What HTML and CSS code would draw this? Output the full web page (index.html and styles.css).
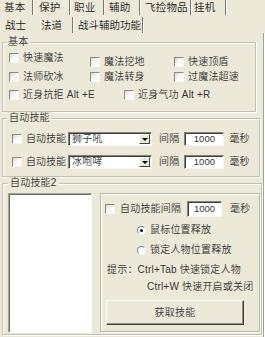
FILE: index.html
```html
<!DOCTYPE html>
<html>
<head>
<meta charset="utf-8">
<link rel="stylesheet" href="styles.css">
</head>
<body>
<div class="tabs t1">
  <span class="tab a1">基本</span>
  <span class="tab a2">保护</span>
  <span class="tab a3">职业</span>
  <span class="tab a4">辅助</span>
  <span class="tab a5">飞捡物品</span>
  <span class="tab a6">挂机</span>
</div>
<div class="tabs t2">
  <span class="tab b1">战士</span>
  <span class="tab b2">法道</span>
  <span class="tab b3">战斗辅助功能</span>
</div>
<div class="page">
  <fieldset class="grp g1">
    <legend>基本</legend>
    <div class="grid3">
      <label class="cb hi"><span class="box"></span>快速魔法</label>
      <label class="cb lo"><span class="box"></span>魔法挖地</label>
      <label class="cb lo"><span class="box"></span>快速顶盾</label>
      <label class="cb"><span class="box"></span>法师砍冰</label>
      <label class="cb"><span class="box"></span>魔法转身</label>
      <label class="cb"><span class="box"></span>过魔法超速</label>
    </div>
    <div class="row3">
      <label class="cb"><span class="box"></span>近身抗拒 Alt +E</label>
      <label class="cb"><span class="box"></span>近身气功 Alt +R</label>
    </div>
  </fieldset>

  <fieldset class="grp g2">
    <legend>自动技能</legend>
    <div class="skrow">
      <label class="cb"><span class="box"></span><span class="lbl">自动技能</span></label>
      <span class="combo"><span class="val">狮子吼</span><span class="arrow"><i></i></span></span>
      <span class="gl">间隔</span>
      <span class="field">1000</span>
      <span class="unit">毫秒</span>
    </div>
    <div class="skrow second">
      <label class="cb"><span class="box"></span><span class="lbl">自动技能</span></label>
      <span class="combo"><span class="val">冰咆哮</span><span class="arrow"><i></i></span></span>
      <span class="gl">间隔</span>
      <span class="field">1000</span>
      <span class="unit">毫秒</span>
    </div>
  </fieldset>

  <fieldset class="grp g3">
    <legend>自动技能2</legend>
    <div class="g3body">
      <div class="listbox"></div>
      <div class="panel">
        <div class="prow">
          <label class="cb wide"><span class="box"></span><span class="lbl6">自动技能间隔</span></label>
          <span class="field small">1000</span>
          <span class="unit2">毫秒</span>
        </div>
        <label class="rb r1"><span class="radio on"></span>鼠标位置释放</label>
        <label class="rb r2"><span class="radio"></span>锁定人物位置释放</label>
        <div class="tip t-a">提示：Ctrl+Tab 快速锁定人物</div>
        <div class="tip t-b">Ctrl+W 快速开启或关闭</div>
        <div class="btn">获取技能</div>
      </div>
    </div>
  </fieldset>
</div>
</body>
</html>
```

FILE: styles.css
```css
* { box-sizing: border-box; }

html, body {
  margin: 0;
  padding: 0;
}

body {
  width: 265px;
  height: 337px;
  overflow: hidden;
  background: #ece9d8;
  color: #363636;
  font-family: "Liberation Sans", "Noto Sans CJK SC DemiLight", "Noto Sans CJK SC Light", "Noto Sans CJK SC", sans-serif;
  font-size: 10px;
  letter-spacing: 0.2px;
  line-height: 12px;
}

/* ---------- tabs ---------- */
.tabs {
  display: flex;
  align-items: flex-start;
}

.t1 {
  height: 16px;
}

.t2 {
  height: 17px;
  padding-top: 1px;
}

.tab {
  display: block;
  white-space: nowrap;
  border-right: 1px solid #77766e;
  box-shadow: 1px 0 0 #ffffff;
  color: #1a1a1a;
}

.t1 .tab {
  height: 15px;
  line-height: 15px;
  font-size: 10.5px;
  letter-spacing: 0.2px;
}

.t2 .tab {
  height: 16px;
  line-height: 16px;
  font-size: 10.5px;
  letter-spacing: 0;
}

.a1 { width: 33px; padding-left: 4px; }
.a2 { width: 37px; padding-left: 6px; }
.a3 { width: 34px; padding-left: 4px; }
.a4 { width: 36px; padding-left: 5px; }
.a5 { width: 51px; padding-left: 5px; }
.a6 { width: 35px; padding-left: 3px; }

.b1 { width: 36px; padding-left: 5px; border-right: none; box-shadow: none; }
.b2 { width: 37px; padding-left: 5px; }
.b3 { width: 70px; padding-left: 5px; }

/* ---------- page ---------- */
.page {
  width: 264px;
  height: 304px;
  padding-top: 3px;
  border-right: 1px solid #a3a197;
  box-shadow: 1px 0 0 #ffffff;
}

.grp {
  margin: 0 0 0 2px;
  padding: 0;
  min-width: 0;
  border: 1px solid #c3c0b0;
  box-shadow: 1px 1px 0 #ffffff, inset 1px 1px 0 #ffffff;
}

.grp legend {
  margin-left: 3px;
  padding: 0 2px;
  line-height: 12px;
  background: #ece9d8;
}

.g1 { width: 254px; height: 76px; }
.g2 { width: 258px; height: 65px; }
.g3 { width: 260px; height: 158px; }

.g2 legend { margin-left: 4px; }
.g3 legend { margin-left: 5px; }

/* ---------- check boxes ---------- */
.cb {
  display: flex;
  align-items: center;
  height: 12px;
  white-space: nowrap;
}

.box {
  flex: none;
  width: 10px;
  height: 10px;
  margin-right: 4px;
  border-top: 1px solid #8b8b86;
  border-left: 1px solid #8b8b86;
  border-right: 1px solid #f6f6f2;
  border-bottom: 1px solid #f6f6f2;
  background: linear-gradient(135deg, #d9d8d0 0%, #f7f7f4 45%, #ffffff 100%);
}

.cb.wide .box { margin-right: 5px; }

/* ---------- group 1 ---------- */
.grid3 {
  display: grid;
  grid-template-columns: 81px 84px 1fr;
  row-gap: 3px;
  padding-left: 6px;
}

.grid3 .hi { margin-top: 4px; }
.grid3 .lo { margin-top: 8px; }

.row3 {
  display: grid;
  grid-template-columns: 115px 1fr;
  padding-left: 6px;
  margin-top: 6px;
}

/* ---------- group 2 ---------- */
.skrow {
  display: flex;
  align-items: center;
  height: 14px;
  margin-top: 8px;
  padding-left: 9px;
}

.skrow.second { margin-top: 9px; }

.lbl {
  width: 42px;
  letter-spacing: 0;
}

.combo {
  display: flex;
  align-items: center;
  width: 84px;
  height: 14px;
  padding: 0 1px 0 2px;
  background: #ffffff;
  border-top: 1px solid #84837c;
  border-left: 1px solid #84837c;
  border-right: 1px solid #f5f5f2;
  border-bottom: 1px solid #f5f5f2;
  box-shadow: inset 1px 1px 0 #3f3f3f;
}

.combo .val {
  flex: 1;
  padding-left: 1px;
}

.arrow {
  display: flex;
  align-items: center;
  justify-content: center;
  width: 11px;
  height: 10px;
  background: #ece9d8;
  border-top: 1px solid #ffffff;
  border-left: 1px solid #ffffff;
  border-right: 1px solid #404040;
  border-bottom: 1px solid #404040;
}

.arrow i {
  display: block;
  width: 0;
  height: 0;
  border-left: 3px solid transparent;
  border-right: 3px solid transparent;
  border-top: 3px solid #000000;
}

.gl { margin-left: 7px; }

.field {
  width: 40px;
  height: 14px;
  margin-left: 5px;
  line-height: 12px;
  text-align: center;
  font-size: 9.5px;
  letter-spacing: 0;
  background: #ffffff;
  border-top: 1px solid #84837c;
  border-left: 1px solid #84837c;
  border-right: 1px solid #f5f5f2;
  border-bottom: 1px solid #f5f5f2;
  box-shadow: inset 1px 1px 0 #3f3f3f;
}

.unit { margin-left: 5px; }

/* ---------- group 3 ---------- */
.g3body {
  display: flex;
  align-items: flex-start;
  gap: 8px;
  padding: 4px 0 0 5px;
}

.listbox {
  flex: none;
  width: 84px;
  height: 140px;
  background: #ffffff;
  border-top: 1px solid #a6a59c;
  border-left: 1px solid #a6a59c;
  border-right: 1px solid #fafaf7;
  border-bottom: 1px solid #fafaf7;
  box-shadow: inset 1px 1px 0 #6f6e66;
}

.panel {
  flex: none;
  width: 160px;
  height: 139px;
  padding: 7px 0 0 4px;
  border: 1px solid #b9b6a6;
  box-shadow: inset 1px 1px 0 #ffffff, 1px 1px 0 #ffffff;
}

.prow {
  display: flex;
  align-items: center;
  height: 16px;
}

.lbl6 { width: 63px; }

.field.small {
  width: 35px;
  height: 16px;
  line-height: 14px;
  margin-left: 4px;
}

.unit2 { margin-left: 8px; }

.rb {
  display: flex;
  align-items: center;
  height: 12px;
  padding-left: 32px;
  white-space: nowrap;
}

.r1 { margin-top: 7px; }
.r2 { margin-top: 8px; }

.radio {
  flex: none;
  position: relative;
  width: 9px;
  height: 9px;
  margin-right: 4px;
  border-radius: 50%;
  border: 1px solid;
  border-color: #86857e #f3f3ef #f3f3ef #86857e;
  background: #ffffff;
}

.radio.on::after {
  content: "";
  position: absolute;
  left: 2px;
  top: 2px;
  width: 3px;
  height: 3px;
  border-radius: 50%;
  background: #111111;
}

.tip {
  height: 12px;
  white-space: nowrap;
}

.t-a { margin-top: 8px; padding-left: 2px; }
.t-b { margin-top: 5px; padding-left: 42px; }

.btn {
  width: 138px;
  height: 25px;
  margin: 7px 0 0 1px;
  line-height: 23px;
  text-align: center;
  background: #ece9d8;
  border-top: 1px solid #ffffff;
  border-left: 1px solid #ffffff;
  border-right: 1px solid #3d3d3d;
  border-bottom: 1px solid #3d3d3d;
  box-shadow: inset -1px -1px 0 #8e8d85;
}
```
